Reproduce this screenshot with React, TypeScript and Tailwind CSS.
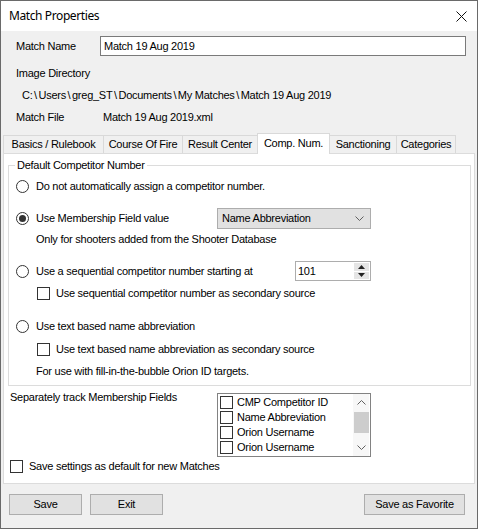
import React from "react";

const Radio = ({ checked = false }: { checked?: boolean }) => (
  <span className="flex h-[13px] w-[13px] shrink-0 items-center justify-center rounded-full border border-[#333333] bg-white">
    {checked && <span className="h-[7px] w-[7px] rounded-full bg-[#333333]" />}
  </span>
);

const Check = () => <span className="h-[13px] w-[13px] shrink-0 border border-[#333333] bg-white" />;

const Chevron = ({ up = false }: { up?: boolean }) => (
  <svg width="9" height="5" viewBox="0 0 9 5" className={up ? "rotate-180" : ""}>
    <path d="M0.5 0.5 L4.5 4.5 L8.5 0.5" fill="none" stroke="#606060" strokeWidth="1" />
  </svg>
);

const tabs = [
  { label: "Basics / Rulebook", w: "w-[100px]" },
  { label: "Course Of Fire", w: "w-[79px]" },
  { label: "Result Center", w: "w-[75px]" },
  { label: "Comp. Num.", w: "w-[73px]", active: true },
  { label: "Sanctioning", w: "w-[66px]" },
  { label: "Categories", w: "w-[60px]" },
];

const fields = ["CMP Competitor ID", "Name Abbreviation", "Orion Username", "Orion Username"];

const pathParts = ["C:", "Users", "greg_ST", "Documents", "My Matches", "Match 19 Aug 2019"];

export default function App() {
  return (
    <div className="flex h-[529px] w-[478px] flex-col border border-[#6a6a6a] bg-[#f0f0f0] font-['Liberation_Sans',Arial,sans-serif] text-[11px] tracking-[-0.25px] text-black">
      {/* title bar */}
      <div className="flex h-[30px] shrink-0 items-center justify-between bg-white pl-[8px] pr-[10px]">
        <span className="font-['Noto_Sans',sans-serif] text-[12px] tracking-[-0.4px]">Match Properties</span>
        <svg width="11" height="11" viewBox="0 0 11 11">
          <path d="M0.5 0.5 L10.5 10.5 M10.5 0.5 L0.5 10.5" stroke="#111" strokeWidth="1" />
        </svg>
      </div>

      {/* header fields */}
      <div className="mt-[5px] flex h-[20px] items-center pl-[15px]">
        <span className="w-[84px]">Match Name</span>
        <div className="flex h-[20px] w-[366px] items-center border border-[#7a7a7a] bg-white px-[3px]">Match 19 Aug 2019</div>
      </div>
      <div className="mt-[9px] flex h-[16px] items-center pl-[15px]">Image Directory</div>
      <div className="mt-[6px] flex h-[16px] items-center whitespace-pre pl-[21px]">
        {pathParts.map((p, i) => (
          <React.Fragment key={i}>
            {i > 0 && <span className="mx-[1.6px]">\</span>}
            {p}
          </React.Fragment>
        ))}
      </div>
      <div className="mt-[6px] flex h-[16px] items-center pl-[15px]">
        <span className="w-[87px]">Match File</span>
        <span>Match 19 Aug 2019.xml</span>
      </div>

      {/* tab strip */}
      <div className="ml-[2px] mt-[8px] flex h-[20px] items-end">
        {tabs.map((t, i) =>
          t.active ? (
            <div
              key={t.label}
              className={`${t.w} relative z-10 -mb-px flex h-[21px] items-center justify-center border-x border-t border-[#d9d9d9] bg-white pb-[2px]`}
            >
              {t.label}
            </div>
          ) : (
            <div
              key={t.label}
              className={`${t.w} flex h-[18px] items-center justify-center border-t border-[#d9d9d9] ${
                i === 0 || !tabs[i - 1].active ? "border-l" : ""
              } ${i === tabs.length - 1 ? "border-r" : ""}`}
            >
              {t.label}
            </div>
          )
        )}
      </div>

      {/* tab panel */}
      <div className="ml-[2px] flex h-[331px] w-[472px] flex-col border border-[#dcdcdc] bg-white">
        <fieldset className="ml-[4px] mt-[4px] w-[463px] border border-[#dcdcdc] pb-[6px]">
          <legend className="ml-[6px] px-[2px] leading-[14px]">Default Competitor Number</legend>

          <div className="mt-[6px] flex h-[16px] items-center gap-[7px] pl-[7px]">
            <Radio />
            <span>Do not automatically assign a competitor number.</span>
          </div>

          <div className="mt-[16px] flex h-[16px] items-center pl-[7px]">
            <div className="flex w-[201px] items-center gap-[7px]">
              <Radio checked />
              <span>Use Membership Field value</span>
            </div>
            <div className="flex h-[21px] w-[154px] shrink-0 items-center justify-between border border-[#adadad] bg-[#e1e1e1] pl-[4px] pr-[6px]">
              <span>Name Abbreviation</span>
              <Chevron />
            </div>
          </div>
          <div className="mt-[5px] flex h-[16px] items-center pl-[27px]">Only for shooters added from the Shooter Database</div>

          <div className="mt-[16px] flex h-[16px] items-center pl-[7px]">
            <div className="flex w-[279px] items-center gap-[7px]">
              <Radio />
              <span>Use a sequential competitor number starting at</span>
            </div>
            <div className="flex h-[20px] w-[76px] shrink-0 items-center border border-[#adadad] bg-white pl-[2px]">
              <span className="flex-1">101</span>
              <div className="mr-[1px] flex h-[16px] w-[15px] flex-col gap-[1px]">
                <div className="flex flex-1 items-center justify-center bg-[#e5e5e5]">
                  <svg width="7" height="4" viewBox="0 0 7 4">
                    <path d="M3.5 0 L7 4 L0 4 Z" fill="#222" />
                  </svg>
                </div>
                <div className="flex flex-1 items-center justify-center bg-[#e5e5e5]">
                  <svg width="7" height="4" viewBox="0 0 7 4">
                    <path d="M0 0 L7 0 L3.5 4 Z" fill="#222" />
                  </svg>
                </div>
              </div>
            </div>
          </div>
          <div className="mt-[6px] flex h-[16px] items-center gap-[6px] pl-[28px]">
            <Check />
            <span>Use sequential competitor number as secondary source</span>
          </div>

          <div className="mt-[17px] flex h-[16px] items-center gap-[7px] pl-[7px]">
            <Radio />
            <span>Use text based name abbreviation</span>
          </div>
          <div className="mt-[7px] flex h-[16px] items-center gap-[6px] pl-[28px]">
            <Check />
            <span>Use text based name abbreviation as secondary source</span>
          </div>
          <div className="mt-[6px] flex h-[16px] items-center pl-[27px]">For use with fill-in-the-bubble Orion ID targets.</div>
        </fieldset>

        <div className="mt-[4px] flex items-start pl-[6px]">
          <span className="w-[207px] leading-[14px]">Separately track Membership Fields</span>
          <div className="mt-[3px] flex h-[64px] w-[154px] border border-[#828282] bg-white">
            <div className="flex flex-1 flex-col pl-[2px] pt-[1px]">
              {fields.map((f, i) => (
                <div key={i} className="flex h-[15px] items-center gap-[4px]">
                  <Check />
                  <span>{f}</span>
                </div>
              ))}
            </div>
            <div className="mr-[1px] flex w-[16px] flex-col items-center bg-[#f7f7f7]">
              <div className="flex h-[17px] items-center">
                <Chevron up />
              </div>
              <div className="mt-[1px] h-[21px] w-[15px] bg-[#cdcdcd]" />
              <div className="flex-1" />
              <div className="flex h-[17px] items-center">
                <Chevron />
              </div>
            </div>
          </div>
        </div>

        <div className="mt-[1px] flex h-[16px] items-center gap-[6px] pl-[6px]">
          <Check />
          <span>Save settings as default for new Matches</span>
        </div>
      </div>

      {/* buttons */}
      <div className="ml-[8px] mr-[12px] mt-[10px] flex">
        <button className="flex h-[21px] w-[73px] items-center justify-center border border-[#adadad] bg-[#e1e1e1]">Save</button>
        <button className="ml-[8px] flex h-[21px] w-[73px] items-center justify-center border border-[#adadad] bg-[#e1e1e1]">Exit</button>
        <button className="ml-auto flex h-[21px] w-[101px] items-center justify-center border border-[#adadad] bg-[#e1e1e1]">
          Save as Favorite
        </button>
      </div>
    </div>
  );
}
